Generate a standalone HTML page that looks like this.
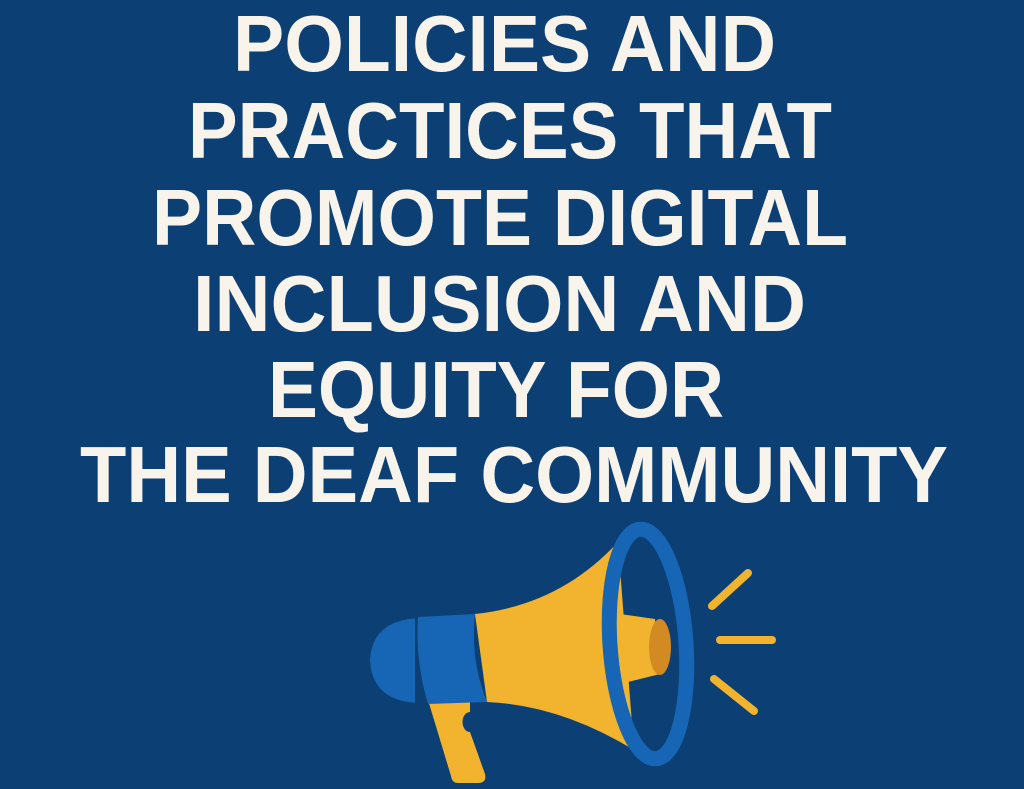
<!DOCTYPE html>
<html><head><meta charset="utf-8"><style>
html,body{margin:0;padding:0;background:#0c3f73;}
svg{display:block}
text{font-family:"Liberation Sans",sans-serif;font-weight:bold;font-size:80px;fill:#f8f4ec;}
</style></head><body>
<svg width="1024" height="789" viewBox="0 0 1024 789" xmlns="http://www.w3.org/2000/svg">
<rect width="1024" height="789" fill="#0c3f73"/>
<text x="233" y="71" textLength="543" lengthAdjust="spacingAndGlyphs">POLICIES AND</text>
<text x="188" y="158" textLength="644" lengthAdjust="spacingAndGlyphs">PRACTICES THAT</text>
<text x="152" y="245" textLength="696" lengthAdjust="spacingAndGlyphs">PROMOTE DIGITAL</text>
<text x="193" y="331" textLength="613" lengthAdjust="spacingAndGlyphs">INCLUSION AND</text>
<text x="268" y="417" textLength="456" lengthAdjust="spacingAndGlyphs">EQUITY FOR</text>
<text x="80" y="502" textLength="868" lengthAdjust="spacingAndGlyphs">THE DEAF COMMUNITY</text>
<!-- handle -->
<path d="M428 700 L470 700 L470 712 A6 8 0 0 0 470 732 L485 774 Q487 783 478 783 L458 783 Q452 783 451 776 Z" fill="#f2b42e"/>
<!-- cone -->
<path d="M475 614 Q560 605 618 542 L634 750 Q560 705 487 702 Z" fill="#f2b42e"/>
<!-- back cap -->
<path d="M420 618 Q372 620 370 660 Q372 702 420 703 Z" fill="#1766b5"/>
<rect x="415" y="616" width="8" height="88" fill="#0c3f73"/>
<!-- band -->
<path d="M418 617 L475 614 Q470 660 487 702 L428 704 Q415 660 418 617 Z" fill="#1766b5"/>
<!-- nozzle -->
<path d="M620 614 L655 619 L660 674 L624 683 Z" fill="#f2b42e"/>
<ellipse cx="660" cy="647" rx="11" ry="28" fill="#d38a22"/>
<!-- ring -->
<ellipse cx="648" cy="644" rx="38" ry="115" fill="none" stroke="#1766b5" stroke-width="15" transform="rotate(-4 648 644)"/>
<!-- lines -->
<g stroke="#f2b42e" stroke-width="8" stroke-linecap="round">
<line x1="712" y1="606" x2="748" y2="573"/>
<line x1="720" y1="640" x2="772" y2="640"/>
<line x1="714" y1="679" x2="754" y2="711"/>
</g>
</svg>
</body></html>
